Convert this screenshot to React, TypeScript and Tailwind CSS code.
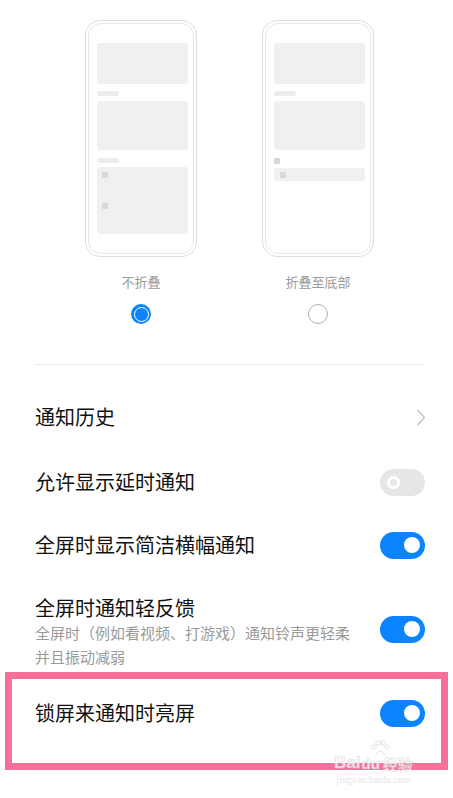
import React from "react";

const BLUE = "bg-[#0d84ff]";

function PhoneFrame({ children }: { children: React.ReactNode }) {
  return (
    <div className="w-[112px] h-[237px] rounded-[15px] border border-[#dcdcdc] p-[2px]">
      <div className="w-full h-full rounded-[13px] border border-[#e8e8e8] pt-[19px] px-[8px]">
        {children}
      </div>
    </div>
  );
}

function Block({ h }: { h: string }) {
  return <div className={`w-[91px] ${h} rounded-[3px] bg-[#f0f0f0]`} />;
}

const Pill = () => <div className="w-[22px] h-[5px] rounded-full bg-[#ececec]" />;
const Square = () => <div className="w-[6px] h-[6px] rounded-[1px] bg-[#d8d8d8]" />;

function Toggle({ on }: { on: boolean }) {
  if (on) {
    return (
      <div className={`w-[45px] h-[27px] rounded-full ${BLUE} flex items-center justify-end pr-[5px] shrink-0`}>
        <div className="w-[16px] h-[16px] rounded-full bg-white" />
      </div>
    );
  }
  return (
    <div className="w-[45px] h-[27px] rounded-full bg-[#e6e6e6] flex items-center pl-[7px] shrink-0">
      <div className="w-[13px] h-[13px] rounded-full border-[3px] border-white bg-[#e6e6e6]" />
    </div>
  );
}

function Row({ title, h, right }: { title: string; h: string; right: React.ReactNode }) {
  return (
    <div className={`flex items-center justify-between pl-[35px] pr-[28px] ${h}`}>
      <span className="text-[20px] leading-[26px] text-[#111]">{title}</span>
      {right}
    </div>
  );
}

export default function App() {
  return (
    <div className="relative w-[453px] h-[798px] overflow-hidden bg-white font-['Noto_Sans_CJK_SC',sans-serif]">
      {/* fold style preview */}
      <div className="flex pl-[85px] gap-[65px] pt-[20px]">
        <div className="flex flex-col items-center">
          <PhoneFrame>
            <div className="flex flex-col">
              <Block h="h-[41px]" />
              <div className="mt-[7px]"><Pill /></div>
              <div className="mt-[5px]"><Block h="h-[49px]" /></div>
              <div className="mt-[8px]"><Pill /></div>
              <div className="mt-[4px] w-[91px] h-[67px] rounded-[3px] bg-[#f0f0f0] pt-[5px] pl-[5px] flex flex-col gap-[25px]">
                <Square />
                <Square />
              </div>
            </div>
          </PhoneFrame>
          <span className="mt-[17px] text-[13px] leading-[16px] text-[#9a9a9a]">不折叠</span>
          <div className={`mt-[14px] w-[20px] h-[20px] rounded-full ${BLUE} flex items-center justify-center`}>
            <div className={`w-[15px] h-[15px] rounded-full border-[1.5px] border-white ${BLUE}`} />
          </div>
        </div>
        <div className="flex flex-col items-center">
          <PhoneFrame>
            <div className="flex flex-col">
              <Block h="h-[41px]" />
              <div className="mt-[7px]"><Pill /></div>
              <div className="mt-[5px]"><Block h="h-[49px]" /></div>
              <div className="mt-[8px]"><Square /></div>
              <div className="mt-[4px] w-[91px] h-[13px] rounded-[3px] bg-[#f0f0f0] pl-[6px] flex items-center">
                <Square />
              </div>
            </div>
          </PhoneFrame>
          <span className="mt-[17px] text-[13px] leading-[16px] text-[#9a9a9a]">折叠至底部</span>
          <div className="mt-[14px] w-[20px] h-[20px] rounded-full border border-[#b0b0b0]" />
        </div>
      </div>

      <div className="mt-[40px] ml-[35px] mr-[28px] h-px bg-[#ededed]" />

      <div className="mt-[20px]">
        <Row
          title="通知历史"
          h="h-[64px]"
          right={
            <svg width="10" height="17" viewBox="0 0 10 17" className="mr-[-1px]">
              <polyline points="1.5,1 8.5,8.5 1.5,16" fill="none" stroke="#bdbdbd" strokeWidth="1.2" />
            </svg>
          }
        />
        <Row title="允许显示延时通知" h="h-[66px]" right={<Toggle on={false} />} />
        <Row title="全屏时显示简洁横幅通知" h="h-[60px]" right={<Toggle on />} />
        <div className="flex items-center justify-between pl-[35px] pr-[28px] pt-[20px]">
          <div className="flex flex-col">
            <span className="text-[20px] leading-[26px] text-[#111]">全屏时通知轻反馈</span>
            <span className="text-[15px] leading-[24px] text-[#9a9a9a]">
              全屏时（例如看视频、打游戏）通知铃声更轻柔
              <br />
              并且振动减弱
            </span>
          </div>
          <div className="mb-[6px]">
            <Toggle on />
          </div>
        </div>

        <div className="mt-[3px] mx-[5px] h-[98px] border-[7px] border-[#f6709a]">
          <div className="flex items-center justify-between pl-[23px] pr-[16px] pt-[20px] h-[48px]">
            <span className="text-[20px] leading-[26px] text-[#111]">锁屏来通知时亮屏</span>
            <Toggle on />
          </div>
        </div>
      </div>

      {/* watermark */}
      <div className="absolute left-[334px] top-[740px] flex flex-col items-center opacity-80">
        <svg width="22" height="16" viewBox="0 0 22 16" className="ml-[14px] mb-[-2px]">
          <g fill="none" stroke="#dadada" strokeWidth="1">
            <circle cx="5" cy="7" r="2.2" />
            <circle cx="9" cy="3" r="2.2" />
            <circle cx="14" cy="3" r="2.2" />
            <circle cx="18" cy="7" r="2.2" />
            <path d="M7 15 Q11.5 7 16 15" />
          </g>
        </svg>
        <div className="flex items-end font-['Liberation_Sans',sans-serif] font-bold leading-none">
          <span className="text-[17px] text-white [-webkit-text-stroke:0.6px_#d4d4d4]">Bai</span>
          <span className="text-[15px] text-white [-webkit-text-stroke:0.6px_#d4d4d4] px-[1px]">du</span>
          <span className="ml-[2px] text-[15px] text-white [-webkit-text-stroke:0.5px_#d4d4d4] font-['Noto_Sans_CJK_SC',sans-serif]">经验</span>
        </div>
        <span className="mt-[4px] text-[10px] leading-none text-[#e2e2e2] font-['Liberation_Serif',serif]">jingyan.baidu.com</span>
      </div>
    </div>
  );
}
